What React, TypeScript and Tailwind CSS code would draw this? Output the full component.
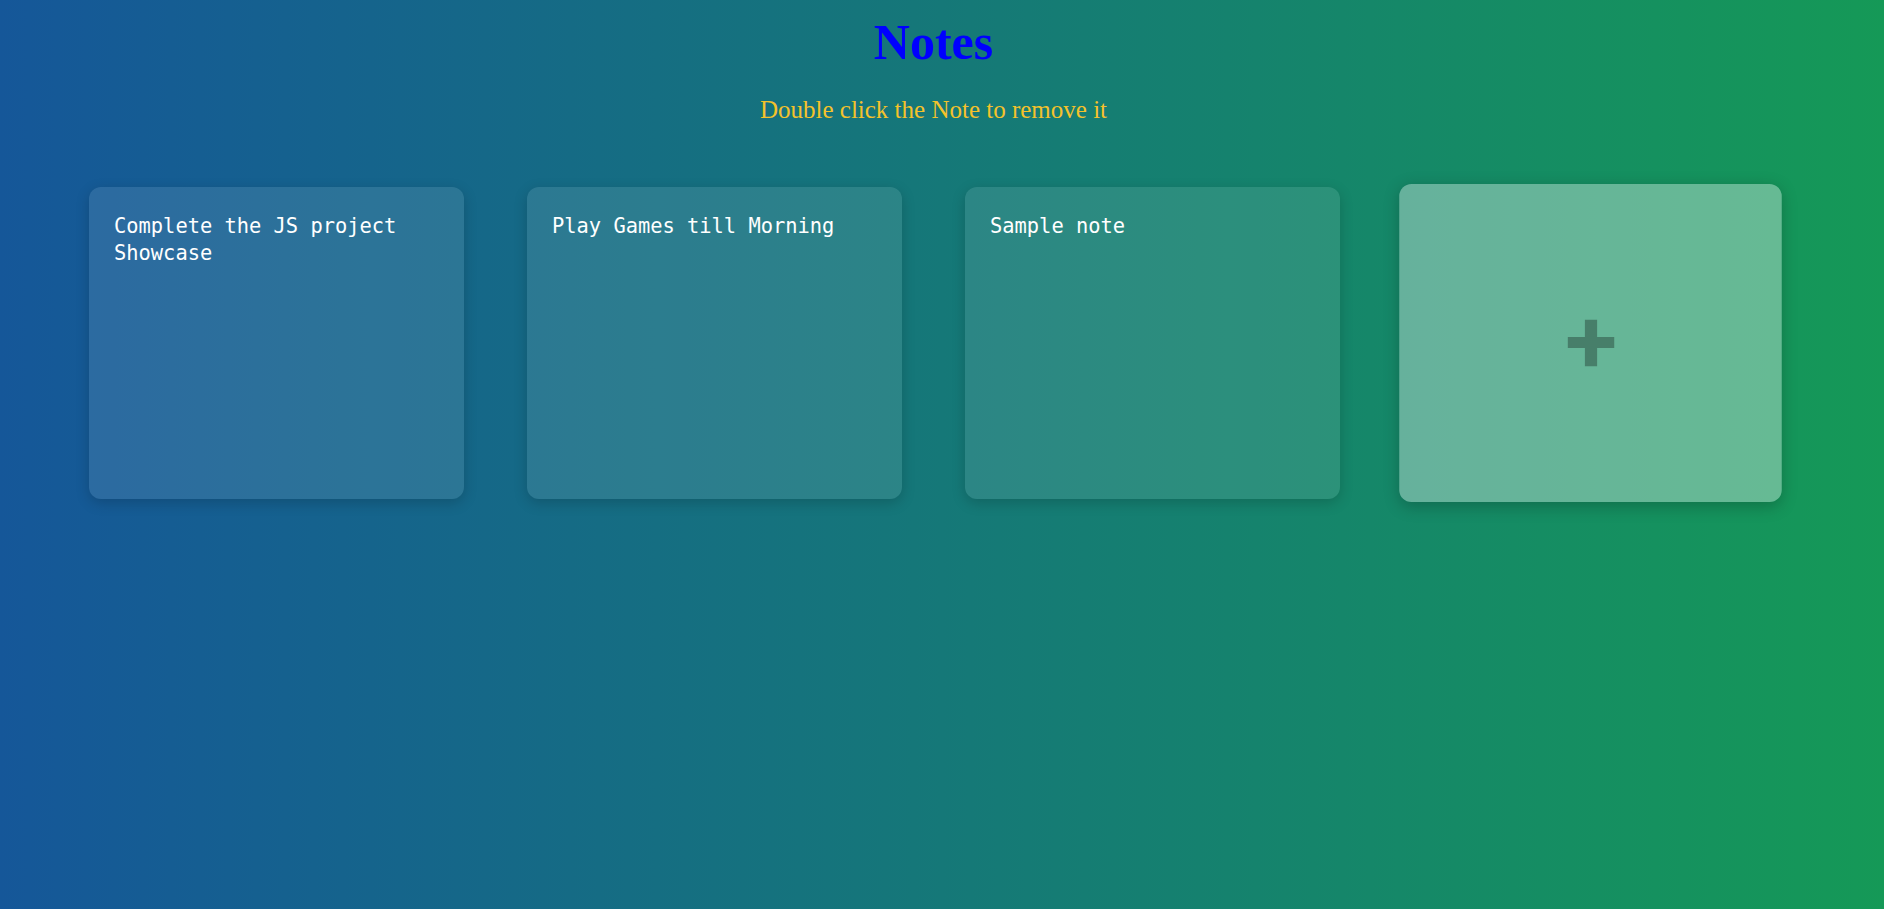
import { useState } from "react";

const initialNotes = [
  "Complete the JS project Showcase",
  "Play Games till Morning",
  "Sample note",
];

export default function App() {
  const [notes, setNotes] = useState<string[]>(initialNotes);

  const addNote = () => setNotes([...notes, ""]);

  const removeNote = (index: number) => {
    setNotes(notes.filter((_, i) => i !== index));
  };

  const updateNote = (index: number, value: string) => {
    setNotes(notes.map((n, i) => (i === index ? value : n)));
  };

  return (
    <div className="min-h-[909px] w-full bg-[linear-gradient(to_right,#155799,#159957)] font-['Liberation_Serif',serif]">
      <div className="w-[1867px]">
        {/* Header */}
        <h1 className="pt-[14px] text-center text-[50px] font-bold leading-[57px] text-[#0000ff]">
          Notes
        </h1>
        <p className="mt-[24px] text-center text-[25px] leading-[29px] text-[#f4c22b]">
          Double click the Note to remove it
        </p>

        {/* Notes grid */}
        <div className="mt-[63px] flex flex-wrap justify-center gap-[63px]">
          {notes.map((note, i) => (
            <textarea
              key={i}
              value={note}
              placeholder="Empty Note"
              onChange={(e) => updateNote(i, e.target.value)}
              onDoubleClick={() => removeNote(i)}
              className="h-[312px] w-[375px] resize-none rounded-[12px] border-none bg-white/10 px-[25px] pt-[26px] pb-[25px] font-['DejaVu_Sans_Mono',monospace] text-[20.4px] leading-[27px] text-white shadow-[0_4px_14px_rgba(0,0,0,0.18)] outline-none placeholder:text-white/50"
            />
          ))}

          <button
            onClick={addNote}
            className="flex h-[312px] w-[375px] scale-[1.02] cursor-pointer items-center justify-center rounded-[12px] bg-white/35 shadow-[0_4px_16px_rgba(0,0,0,0.22)]"
          >
            <svg width="46" height="46" viewBox="0 0 46 46" className="text-black/30">
              <path d="M17 0h12v17h17v11H29v18H17V28H0V17h17z" fill="currentColor" />
            </svg>
          </button>
        </div>
      </div>
    </div>
  );
}
